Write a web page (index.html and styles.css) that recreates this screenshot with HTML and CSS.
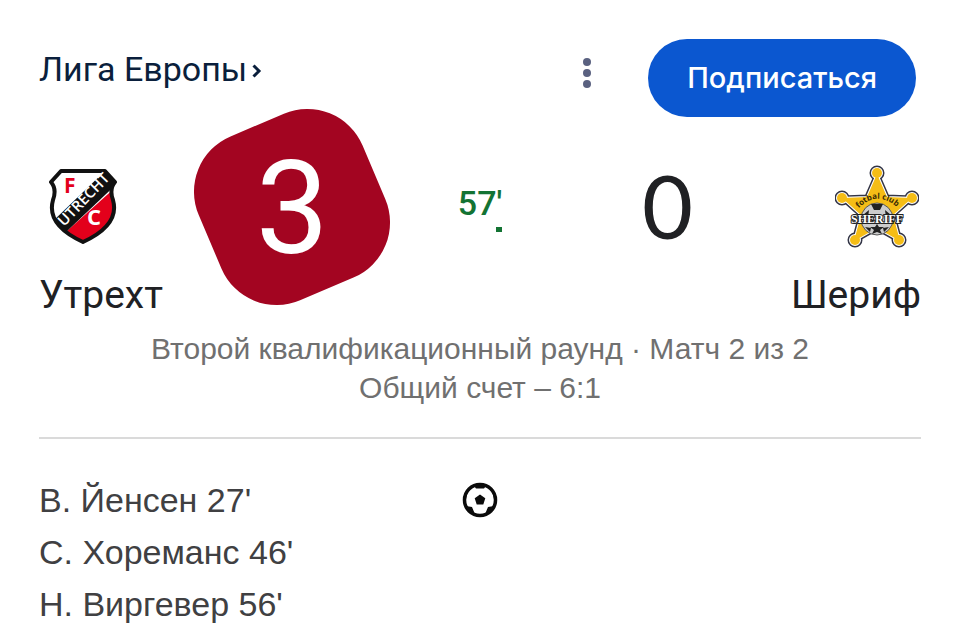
FILE: index.html
```html
<!DOCTYPE html>
<html lang="ru">
<head>
<meta charset="utf-8">
<meta name="viewport" content="width=device-width, initial-scale=1">
<title>Утрехт – Шериф</title>
<link rel="stylesheet" href="styles.css">
</head>
<body>
<main class="card">
  <header class="top">
    <a class="league" href="#">Лига Европы<svg class="chevron" viewBox="0 0 10 18" aria-hidden="true"><path d="M1.5 3.500 7 9l-5.500 5.500"/></svg></a>
    <button class="menu" type="button" aria-label="Ещё"><svg viewBox="0 0 10 32" aria-hidden="true"><circle cx="5" cy="5" r="4"/><circle cx="5" cy="16" r="4"/><circle cx="5" cy="27" r="4"/></svg></button>
    <button class="subscribe" type="button">Подписаться</button>
  </header>

  <section class="match">
    <div class="team">
      <svg class="crest utrecht" viewBox="0 0 70 76" aria-hidden="true">
        <defs><clipPath id="shield"><path d="M13 2H57L67 13Q61 20 65 31 72 56 35 73-2 56 5 31 9 20 3 13Z"/></clipPath></defs>
        <g clip-path="url(#shield)">
          <path fill="#fff" d="M0 0h70v76H0z"/>
          <path fill="#e3001b" d="M70 16V76H10V70Z"/>
          <path fill="#111" d="M0 57 60-1 80 4 17 64Z"/>
        </g>
        <path fill="none" stroke="#111" stroke-width="4" stroke-linejoin="round" d="M13 2H57L67 13Q61 20 65 31 72 56 35 73-2 56 5 31 9 20 3 13Z"/>
        <text class="crest-red" x="16" y="24">F</text>
        <text class="crest-white" x="39" y="56">C</text>
        <text class="crest-name" transform="translate(16 58) rotate(-46)">UTRECHT</text>
      </svg>
      <span class="name">Утрехт</span>
    </div>
    <div class="score goal"><span>3</span></div>
    <div class="clock">57'<i class="tick"></i></div>
    <div class="score">0</div>
    <div class="team away">
      <svg class="crest sheriff" viewBox="0 0 84 84" aria-hidden="true">
        <defs>
          <g id="star"><path d="M42 9 52 32 77 33 58 50 65 76 42 63 19 76 26 50 7 33 32 32Z"/><circle cx="42" cy="8" r="5"/><circle cx="77" cy="33" r="5"/><circle cx="64" cy="75" r="5"/><circle cx="20" cy="75" r="5"/><circle cx="7" cy="33" r="5"/></g>
          <path id="arc" d="M23 44Q42 24 63 43"/>
        </defs>
        <use href="#star" fill="#333546" stroke="#333546" stroke-width="5"/>
        <use href="#star" fill="#fff" stroke="#fff" stroke-width="2"/>
        <use href="#star" fill="#f5bd16"/>
        <circle cx="42" cy="54" r="16" fill="#ccc" stroke="#555" stroke-width="1"/>
        <path fill="#222" d="M36 39h12l-3 6h-6zM28 50l6-5-1 8zM56 50l-6-5 1 8zM42 59l2 3 5 0-4 3 2 4-5-2-5 2 2-4-4-3 5 0zM30 62l6 1-1 4zM54 62l-6 1 1 4z"/>
        <text class="star-small"><textPath href="#arc" startOffset="1">fotbal club</textPath></text>
        <text class="star-name" x="42" y="58">SHERIFF</text>
      </svg>
      <span class="name">Шериф</span>
    </div>
  </section>

  <p class="stage">Второй квалификационный раунд · Матч 2 из 2<br>Общий счет – 6:1</p>

  <section class="events">
    <ul class="scorers">
      <li>В. Йенсен 27'</li>
      <li>С. Хореманс 46'</li>
      <li>Н. Виргевер 56'</li>
    </ul>
    <svg class="ball" viewBox="0 0 36 36" role="img" aria-label="Голы">
      <defs><clipPath id="ballclip"><circle cx="18" cy="18" r="16"/></clipPath></defs>
      <circle cx="18" cy="18" r="15.500" fill="#fff" stroke="#0b0b0b" stroke-width="3.500"/>
      <path clip-path="url(#ballclip)" fill="#0b0b0b" d="M18 12.500 23.300 16.300 21.300 22.500H14.700L12.700 16.300ZM12 0H24V4L22 6.500H14L12 4ZM36 8V20L32 17 30.500 11ZM0 8V20L4 17 5.500 11ZM32 24 26 25 23.500 31 27 36 36 30ZM4 24 10 25 12.500 31 9 36 0 30Z"/>
    </svg>
  </section>
</main>
</body>
</html>
```
FILE: styles.css
```css
* { box-sizing: border-box; }

body {
  margin: 0;
  background: #fff;
  color: #202124;
  font-family: "Liberation Sans", Arial, sans-serif;
}

.card { padding: 39px 39px 0; }

.top {
  display: flex;
  align-items: center;
  padding-right: 5px;
}

.league {
  display: flex;
  align-items: center;
  gap: 5px;
  margin: 0 auto 18px 0;
  color: #0a1f3c;
  font: 34px/40px Roboto, sans-serif;
  text-decoration: none;
}

.chevron {
  width: 10px;
  height: 18px;
  margin-top: 4px;
  fill: none;
  stroke: currentColor;
  stroke-width: 3;
}

button {
  border: 0;
  font-family: inherit;
  cursor: pointer;
}

.menu {
  display: flex;
  margin: 0 40px 10px 0;
  padding: 8px 16px;
  background: none;
}

.menu svg {
  width: 10px;
  height: 32px;
  fill: #5a6180;
}

.subscribe {
  height: 78px;
  padding: 0 39px;
  border-radius: 39px;
  background: #0b57d0;
  color: #fff;
  font: 500 29px/36px Inter, sans-serif;
}

.match {
  display: grid;
  grid-template-columns: 132px 11fr 6fr 11fr 132px;
  padding-top: 42px;
}

.team {
  display: flex;
  flex-direction: column;
  align-items: flex-start;
  gap: 20px;
}

.away { align-items: flex-end; }

.crest { height: 96px; }
.utrecht { width: 70px; margin-left: 9px; }
.sheriff { width: 84px; margin-right: 2px; }

.crest text {
  font-family: "Open Sans", sans-serif;
  font-weight: 700;
}

.crest .crest-red { fill: #e3001b; font-size: 21px; }
.crest .crest-white { fill: #fff; font-size: 22px; }
.crest .crest-name { fill: #fff; font-size: 15px; font-weight: 600; }
.crest .star-small { font-size: 8px; fill: #3a2c05; }

.crest .star-name {
  fill: #fff;
  stroke: #222;
  stroke-width: 2px;
  paint-order: stroke;
  font: 700 12px "Liberation Serif", serif;
  text-anchor: middle;
}

.name { font: 39px/40px Roboto, sans-serif; }

.score {
  display: flex;
  align-items: center;
  justify-content: center;
  height: 96px;
  padding-bottom: 4px;
  font: 88px/92px Lato, sans-serif;
}

.goal {
  position: relative;
  padding: 0;
  color: #fff;
  font: 130px/100px Roboto, sans-serif;
}

.goal::before {
  content: "";
  position: absolute;
  inset: 50% auto auto 50%;
  width: 178px;
  height: 178px;
  border-radius: 60px;
  background: #a30521;
  transform: translate(-50%, -50%) rotate(-23deg);
}

.goal span {
  position: relative;
  padding-top: 4px;
}

.clock {
  display: flex;
  flex-direction: column;
  align-items: center;
  padding-top: 24px;
  color: #137333;
  font: 500 34px/40px Roboto, sans-serif;
}

.tick {
  width: 6px;
  height: 5px;
  margin: 4px 0 0 38px;
  background: currentColor;
}

.stage {
  margin: 0;
  padding: 14px 0 30px;
  border-bottom: 2px solid #dadada;
  color: #707070;
  font-size: 30px;
  line-height: 39px;
  text-align: center;
}

.events {
  display: grid;
  grid-template-columns: 1fr auto 1fr;
  padding-top: 35px;
}

.scorers {
  margin: 0;
  padding: 0;
  color: #404042;
  font-size: 34px;
  line-height: 52px;
  list-style: none;
}

.ball {
  width: 36px;
  height: 36px;
  margin-top: 8px;
}
```
